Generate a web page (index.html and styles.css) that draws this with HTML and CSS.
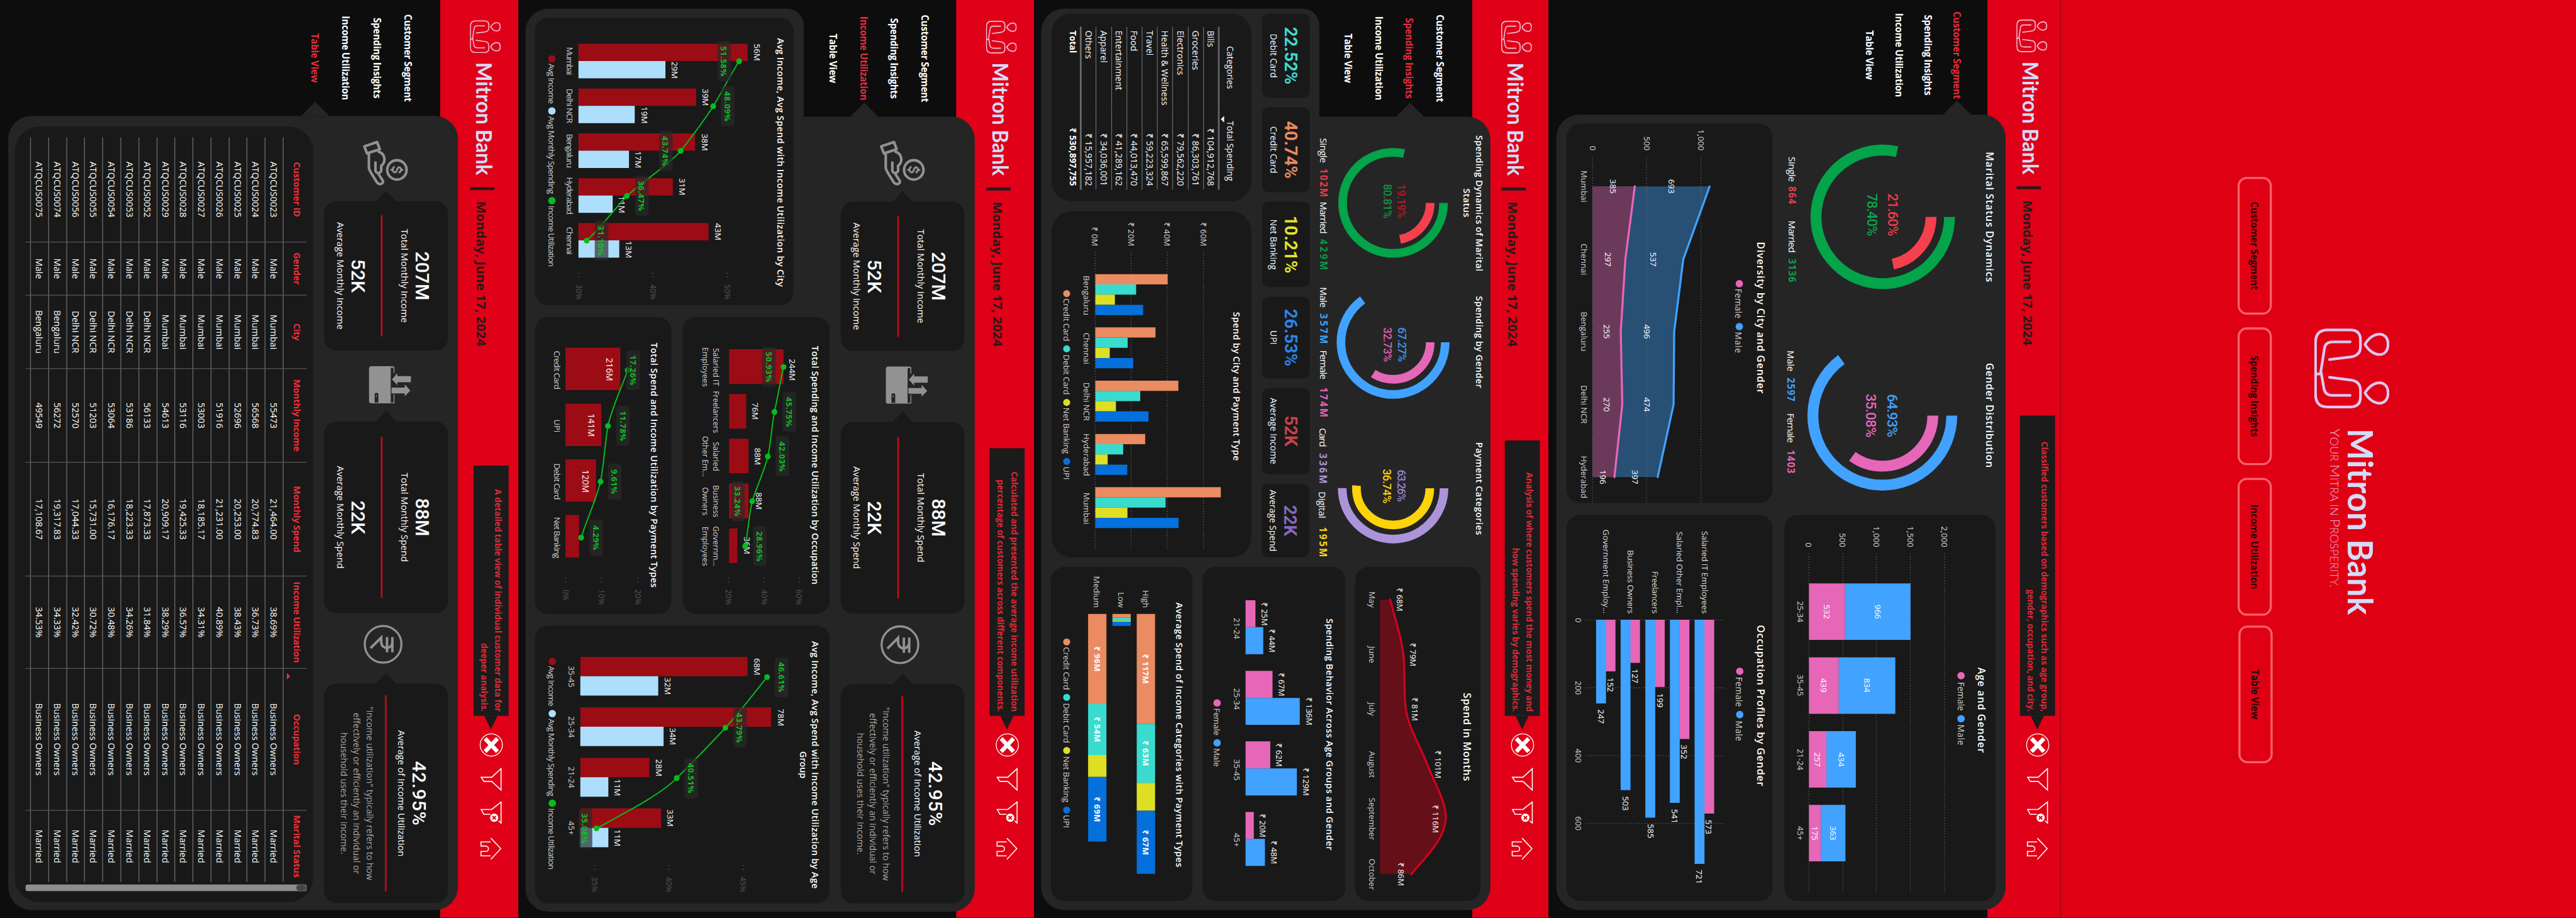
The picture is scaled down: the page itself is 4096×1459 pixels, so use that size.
FILE: index.html
```html
<!DOCTYPE html>
<html lang="en">
<head>
<meta charset="utf-8">
<title>Mitron Bank dashboard</title>
<link rel="stylesheet" href="styles.css">
</head>
<body>
<svg class="defs" aria-hidden="true">
  <symbol id="mark" viewBox="0 0 195 182">
    <g fill="none" stroke="currentColor" stroke-linecap="round" stroke-linejoin="round">
      <path d="M39 59C6 40 6 3 39 3S72 40 39 59Z"/>
      <path d="M157 59C124 40 124 3 157 3S190 40 157 59Z"/>
      <path d="M76 145L70 98Q68 70 45 70H28Q4 70 4 95V150Q4 179 35 179H160Q191 179 191 150V95Q191 70 167 70H150Q127 70 125 98L119 145"/>
      <path d="M33 95V137Q33 154 47 157L111 167V179M163 95V137Q163 154 149 158L104 166"/>
    </g>
  </symbol>
  <symbol id="tools" viewBox="1774 20 320 72">
    <g fill="none" stroke="#fff" stroke-width="2.4">
      <circle cx="1806.700" cy="56" r="27" stroke-width="2"/>
      <path d="M1791 41L1822.500 71M1822.500 41L1791 71" stroke-width="10"/>
      <path d="M1864 32.300H1916L1895 55V74L1885 80.500V55Z"/>
      <path d="M1990.700 38.300L1996 32.300H1945L1963 55V80.500L1975 74V58"/>
      <circle cx="1983" cy="49" r="10" fill="#fff" stroke="none"/>
      <path d="M1979 45L1987 53M1987 45L1979 53" stroke="#e00017" stroke-width="3"/>
      <path d="M2032.700 57L2058 33L2084 57M2041.700 57.500V81H2051.700V70C2051.700 60.500 2065 60.500 2065 70V81H2075.700V57.500"/>
    </g>
  </symbol>
  <symbol id="hand" viewBox="0 0 125 125">
    <g fill="none" stroke="#929292" stroke-width="6.300" stroke-linejoin="round" stroke-linecap="round">
      <path d="M20 117L9.500 86L27 79.500L37 110.500Z"/>
      <path d="M33 82C38 66 58 64 67 76H78C86 76 87 90 78 90H59M38 106H72C78 106 88 98 108 86C116 78 108 68 102 73L85 84"/>
      <circle cx="77" cy="38" r="23.500"/>
      <path stroke-width="4.500" d="M83 32C80 26 70 27 71 33C72 39 83 37 83 43C83 49 73 50 70 45M77 27V24M77 49V52"/>
    </g>
  </symbol>
  <symbol id="wallet" viewBox="0 0 115 115">
    <path fill="#929292" d="M18 44H31V46H20Q17 47 17 50Q17 53 21 53H104V100Q104 105.700 98 105.700H20Q14 105.700 14 99V49Q14 44 18 44ZM82 44H104V54H102V46H82ZM38 4H53V37H60L46 50L31 37H38ZM66 51V19H58L73 5.500L87 19H80V51Z"/>
    <path fill="#252525" d="M102 83H82Q79 83 79 86V89Q79 92 82 92H102Z"/>
    <path fill="#929292" d="M84 87H88V89H84Z"/>
  </symbol>
  <symbol id="rupee" viewBox="0 0 95 95">
    <g fill="none" stroke="#929292">
      <circle cx="47.500" cy="47.500" r="44.500" stroke-width="5"/>
      <path stroke-width="6" d="M30 25H67M30 38H67M30 25H42C61 25 61 52 42 52H31L57 78"/>
    </g>
  </symbol>
</svg>

<div class="view">
<main class="stage">

<section class="page home">
  <div class="hero">
    <svg class="hero-mark" viewBox="0 0 195 182"><use href="#mark"/></svg>
    <svg class="hero-name" viewBox="0 0 460 110">
      <text class="brand" x="0" y="62" font-size="85" textLength="452" lengthAdjust="spacingAndGlyphs">Mitron Bank</text>
      <text class="tagline" x="0" y="105" textLength="385" lengthAdjust="spacingAndGlyphs"><tspan>Y</tspan>OUR <tspan>M</tspan>ITRA IN <tspan>P</tspan>ROSPERITY.</text>
    </svg>
  </div>
  <div class="home-nav"><a>Customer Segment</a><a>Spending Insights</a><a>Income Utilization</a><a class="low">Table View</a></div>
</section>

<section class="page p2">
  <header class="top">
    <svg class="mark" viewBox="0 0 195 182"><use href="#mark"/></svg>
    <svg class="name" viewBox="0 0 276 50"><text class="brand" x="0" y="44.600" font-size="52" textLength="274" lengthAdjust="spacingAndGlyphs">Mitron Bank</text></svg>
    <i class="bar"></i>
    <svg class="date" viewBox="0 0 354 50"><text x="0" y="41" textLength="352" lengthAdjust="spacingAndGlyphs">Monday, June 17, 2024</text></svg>
    <p class="tip" style="width:728px">Classified customers based on demographics such as age group,<br>gender, occupation, and city.</p>
    <svg class="tools"><use href="#tools"/></svg>
  </header>
  <div class="board seg">
    <nav class="nav"><a class="on">Customer Segment</a><a>Spending Insights</a><a>Income Utilization</a><a>Table View</a></nav>
    <div class="panel">
      <svg class="free" viewBox="300 159 920 512">
        <text class="t" x="526" y="172" textLength="316">Marital Status Dynamics</text>
        <text class="t" x="1007" y="172" textLength="254">Gender Distribution</text>
        <g class="ring" stroke-width="26.500">
          <circle cx="526" cy="432" r="162" pathLength="100" stroke="#03a44a" stroke-dasharray="78.4 100" transform="rotate(-90 526 432)"/>
          <circle cx="526" cy="432" r="117" pathLength="100" stroke="#f5404e" stroke-dasharray="21.6 100" transform="rotate(-90 526 432)"/>
          <circle cx="1008" cy="433" r="168.500" pathLength="100" stroke="#41a2ff" stroke-dasharray="64.93 100" transform="rotate(-90 1008 433)"/>
          <circle cx="1008" cy="433" r="122.500" pathLength="100" stroke="#e667b7" stroke-dasharray="35.08 100" transform="rotate(-90 1008 433)"/>
        </g>
        <g class="din" font-size="34">
          <text x="521" y="407" fill="#ee3b49" textLength="104">21.60%</text><text x="521" y="457" fill="#0aa34b" textLength="104">78.40%</text>
          <text x="1008" y="408" fill="#41a2ff" textLength="105">64.93%</text><text x="1008" y="461" fill="#e667b7" textLength="106">35.08%</text>
        </g>
        <g class="lg" font-size="23">
          <text x="380" y="652" textLength="61">Single</text><text class="b" x="452" y="652" fill="#e43c4a" textLength="43">864</text>
          <text x="535" y="652" textLength="78">Married</text><text class="b" x="627" y="652" fill="#0aa34b" textLength="57">3136</text>
          <text x="850" y="655" textLength="51">Male</text><text class="b" x="916" y="655" fill="#41a2ff" textLength="57">2597</text>
          <text x="1002" y="655" textLength="72">Female</text><text class="b" x="1091" y="655" fill="#e667b7" textLength="57">1403</text>
        </g>
      </svg>
      <svg class="card" viewBox="1249 159 936 512">
        <text class="t" x="1722" y="192" textLength="207">Age and Gender</text>
        <circle cx="1638.600" cy="242" r="9" fill="#e667b7"/><circle cx="1743" cy="242" r="9" fill="#41a2ff"/>
        <g class="lg m" font-size="21"><text x="1654" y="242" textLength="70">Female</text><text x="1757" y="242" textLength="50">Male</text></g>
        <path class="grid" d="M1343 282H2167M1343 365H2167M1343 447.600H2167M1343 529H2167M1343 611H2167"/>
        <g class="r"><text x="1327" y="282">2,000</text><text x="1327" y="365">1,500</text><text x="1327" y="447">1,000</text><text x="1327" y="529">500</text><text x="1327" y="611">0</text></g>
        <g fill="#e667b7"><path d="M1415 523.400h137v87.600h-137zM1594 538.700h137v72.300h-137zM1773 568.700h137v42.300h-137zM1952 582.200h137v28.800h-137z"/></g>
        <g fill="#41a2ff"><path d="M1415 364.600h137v159h-137zM1594 401.500h137v137.300h-137zM1773 497.300h137v71.500h-137zM1952 522.500h137v59.800h-137z"/></g>
        <g font-size="20.500"><text x="1483.500" y="444">966</text><text x="1483.500" y="567">532</text><text x="1662" y="470">834</text><text x="1662" y="575">439</text><text x="1842" y="533">434</text><text x="1842" y="590">257</text><text x="2020.600" y="552">363</text><text x="2020.600" y="597">175</text></g>
        <g class="m"><text x="1483.500" y="632">25-34</text><text x="1662" y="632">35-45</text><text x="1842" y="632">21-24</text><text x="2020.600" y="632">45+</text></g>
      </svg>
      <svg class="card" viewBox="300 699 920 500">
        <text class="t" x="770.500" y="727.600" textLength="368">Diversity by City and Gender</text>
        <circle cx="688" cy="780" r="9" fill="#e667b7"/><circle cx="792" cy="780" r="9" fill="#41a2ff"/>
        <g class="lg m" font-size="21"><text x="700" y="781" textLength="72">Female</text><text x="805" y="781" textLength="51">Male</text></g>
        <path fill="#285074" d="M452 852L629 916L804 938L981 939.500L1157 978V1136H452Z"/>
        <path fill="#6b3a5a" d="M452 1033.600L629 1056.500L804 1067.600L981 1064L1157 1083V1136H452Z"/>
        <path class="grid" d="M380 873H1222M380 1005H1222M380 1136H1222"/>
        <g fill="none" stroke-width="5" stroke-linecap="round" stroke-linejoin="round"><path stroke="#41a2ff" d="M452 852L629 916L804 938L981 939.500L1157 978"/><path stroke="#e667b7" d="M452 1033.600L629 1056.500L804 1067.600L981 1064L1157 1083"/></g>
        <g class="r"><text x="365" y="872">1,000</text><text x="365" y="1004">500</text><text x="365" y="1135">0</text></g>
        <g font-size="20.500"><text x="452" y="944">693</text><text x="629" y="988">537</text><text x="804" y="1004">496</text><text x="981" y="1003">474</text><text x="1157" y="1032">397</text><text x="452" y="1086">385</text><text x="629" y="1098">297</text><text x="804" y="1102">255</text><text x="981" y="1101">270</text><text x="1157" y="1110">196</text></g>
        <g class="m"><text x="452" y="1157">Mumbai</text><text x="629" y="1157">Chennai</text><text x="804" y="1157">Bengaluru</text><text x="981" y="1157">Delhi NCR</text><text x="1157" y="1157">Hyderabad</text></g>
      </svg>
      <svg class="card" viewBox="1249 699 936 500">
        <text class="t" x="1711" y="728" textLength="391">Occupation Profiles by Gender</text>
        <circle cx="1628" cy="779" r="9" fill="#e667b7"/><circle cx="1733" cy="779" r="9" fill="#41a2ff"/>
        <g class="lg m" font-size="21"><text x="1642" y="780" textLength="72">Female</text><text x="1748" y="780" textLength="49">Male</text></g>
        <path class="grid" d="M1503.500 817V1155M1668 817V1155M1832.500 817V1155M1997 817V1155"/>
        <path fill="#e667b7" d="M1503 841h470v24h-470zM1503 901h289v24h-289zM1503 961h163v24h-163zM1503 1021h104.500v24h-104.500zM1503 1080.500h125v24h-125z"/>
        <path fill="#41a2ff" d="M1503 864.500h592v24h-592zM1503 924.500h444v24h-444zM1503 984h480v24h-480zM1503 1044h413v24h-413zM1503 1103.500h203v24h-203z"/>
        <g class="r"><text x="1488" y="864" textLength="200">Salaried IT Employees</text><text x="1488" y="924" textLength="199">Salaried Other Empl…</text><text x="1488" y="984" textLength="103">Freelancers</text><text x="1488" y="1044" textLength="154">Business Owners</text><text x="1488" y="1103" textLength="204">Government Employ…</text></g>
        <g class="l" font-size="20.500"><text x="1988" y="854">573</text><text x="2109" y="877">721</text><text x="1806" y="913">352</text><text x="1962" y="936">541</text><text x="1681" y="972">199</text><text x="1998" y="995">585</text><text x="1622" y="1032">127</text><text x="1931" y="1055">503</text><text x="1643" y="1092">152</text><text x="1720" y="1115">247</text></g>
        <g class="m"><text x="1504" y="1170">0</text><text x="1668" y="1170">200</text><text x="1832.500" y="1170">400</text><text x="1997" y="1170">600</text></g>
      </svg>
    </div>
  </div>
</section>

<section class="page p3">
  <header class="top">
    <svg class="mark" viewBox="0 0 195 182"><use href="#mark"/></svg>
    <svg class="name" viewBox="0 0 276 50"><text class="brand" x="0" y="44.600" font-size="52" textLength="274" lengthAdjust="spacingAndGlyphs">Mitron Bank</text></svg>
    <i class="bar"></i>
    <svg class="date" viewBox="0 0 354 50"><text x="0" y="41" textLength="352" lengthAdjust="spacingAndGlyphs">Monday, June 17, 2024</text></svg>
    <p class="tip" style="width:668px">Analysis of where customers spend the most money and<br>how spending varies by demographics.</p>
    <svg class="tools"><use href="#tools"/></svg>
  </header>
  <div class="board">
    <div class="back"><i class="upper"></i><i class="lower"></i></div>
    <div class="spend">
      <div class="left">
        <div class="lead">
          <nav class="nav"><a>Customer Segment</a><a class="on">Spending Insights</a><a>Income Utilization</a><a>Table View</a></nav>
          <svg class="free" viewBox="300 141 1052 424">
            <text class="t s" x="493" y="168" textLength="330">Spending Dynamics of Marital</text><text class="t s" x="492" y="198" textLength="70">Status</text>
            <text class="t s" x="829.500" y="168" textLength="223">Spending by Gender</text><text class="t s" x="1185" y="168" textLength="225">Payment Categories</text>
            <g class="ring" stroke-width="21">
              <circle cx="492" cy="377" r="122.500" pathLength="100" stroke="#03a44a" stroke-dasharray="78.4 100" transform="rotate(-90 492 377)"/>
              <circle cx="492" cy="377" r="90" pathLength="100" stroke="#f5404e" stroke-dasharray="22 100" transform="rotate(-90 492 377)"/>
              <circle cx="830" cy="377" r="126.500" pathLength="100" stroke="#41a2ff" stroke-dasharray="65 100" transform="rotate(-90 830 377)"/>
              <circle cx="830" cy="377" r="90" pathLength="100" stroke="#e667b7" stroke-dasharray="34 100" transform="rotate(-90 830 377)"/>
              <circle cx="1184" cy="377" r="123.500" pathLength="100" stroke="#ac94da" stroke-dasharray="50 100" transform="rotate(-90 1184 377)"/>
              <circle cx="1184" cy="377" r="89" pathLength="100" stroke="#ffd30a" stroke-dasharray="51.200 100" transform="rotate(-90 1184 377)"/>
            </g>
            <g class="din" font-size="27">
              <text x="488" y="357" fill="#bd1420" textLength="83">19.19%</text><text x="488" y="391" fill="#12903f" textLength="84">80.81%</text>
              <text x="836" y="356" fill="#3f93e6" textLength="84">67.27%</text><text x="836" y="391" fill="#dd5fae" textLength="84">32.73%</text>
              <text x="1178" y="357" fill="#9a83cc" textLength="78">63.26%</text><text x="1179" y="392" fill="#ffd30a" textLength="84">36.74%</text>
            </g>
            <g class="lg" font-size="23">
              <text x="335" y="545" textLength="60">Single</text><text class="b" x="408" y="545" fill="#e43c4a" textLength="70">102M</text>
              <text x="489" y="545" textLength="78">Married</text><text class="b" x="580" y="545" fill="#0a9747" textLength="75">429M</text>
              <text x="696" y="545" textLength="50">Male</text><text class="b" x="760" y="545" fill="#41a2ff" textLength="74">357M</text>
              <text x="849" y="545" textLength="71">Female</text><text class="b" x="939" y="545" fill="#e667b7" textLength="73">174M</text>
              <text x="1038" y="547" textLength="46">Card</text><text class="b" x="1099" y="547" fill="#ac94da" textLength="74">336M</text>
              <text x="1192" y="548" textLength="65">Digital</text><text class="b" x="1278" y="547" fill="#ffd30a" textLength="73">195M</text>
            </g>
          </svg>
        </div>
        <div class="tiles">
          <div class="tile"><b class="c-cyan">22.52%</b><span>Debit Card</span></div>
          <div class="tile"><b class="c-orange">40.74%</b><span>Credit Card</span></div>
          <div class="tile"><b class="c-yellow">10.21%</b><span>Net Banking</span></div>
          <div class="tile"><b class="c-blue">26.53%</b><span>UPI</span></div>
          <div class="tile"><b class="c-red">52K</b><span>Average Income</span></div>
          <div class="tile"><b class="c-violet">22K</b><span>Average Spend</span></div>
        </div>
        <div class="lows">
          <div class="catbox">
            <table class="cats">
              <thead><tr><th>Categories</th><th>Total Spending<i></i></th></tr></thead>
              <tbody>
                <tr><td>Bills</td><td>₹ 104,912,768</td></tr>
                <tr><td>Groceries</td><td>₹ 86,303,761</td></tr>
                <tr><td>Electronics</td><td>₹ 79,562,220</td></tr>
                <tr><td>Health &amp; Wellness</td><td>₹ 65,599,867</td></tr>
                <tr><td>Travel</td><td>₹ 59,223,324</td></tr>
                <tr><td>Food</td><td>₹ 44,013,470</td></tr>
                <tr><td>Entertainment</td><td>₹ 41,289,162</td></tr>
                <tr><td>Apparel</td><td>₹ 34,036,001</td></tr>
                <tr><td>Others</td><td>₹ 15,957,182</td></tr>
              </tbody>
              <tfoot><tr><td>Total</td><td>₹ 530,897,755</td></tr></tfoot>
            </table>
          </div>
          <svg class="card big" viewBox="512 721 840 485">
            <text class="t s" x="937" y="756" textLength="361">Spend by City and Payment Type</text>
            <path class="grid" d="M612 837H1330M612 925H1330M612 1012.600H1330M612 1100H1330"/>
            <g class="r"><text x="597" y="837" textLength="58">₹ 60M</text><text x="597" y="925" textLength="58">₹ 40M</text><text x="597" y="1012" textLength="58">₹ 20M</text><text x="597" y="1100" textLength="47">₹ 0M</text></g>
            <path fill="#ea8b61" d="M665 924h24.800v175.500h-24.800zM794 953.500h24.800v146h-24.800zM923 898h24.800v201.500h-24.800zM1052.500 978.500h24.800v121h-24.800zM1181.500 795h24.800v304.500h-24.800z"/>
            <path fill="#39dbcf" d="M689.800 1000.500h24.800v99h-24.800zM818.800 1021h24.800v78.500h-24.800zM947.800 990.500h24.800v109h-24.800zM1077.300 1032h24.800v67.500h-24.800zM1206.300 929h24.800v170.500h-24.800z"/>
            <path fill="#dedf24" d="M714.600 1052h24.800v47.500h-24.800zM843.600 1064.500h24.800v35h-24.800zM972.600 1049.500h24.800v50h-24.800zM1102.100 1069.500h24.800v30h-24.800zM1231.100 1021.500h24.800v78h-24.800z"/>
            <path fill="#0470dc" d="M739.400 983.500h24.800v116h-24.800zM868.400 1007.500h24.800v92h-24.800zM997.400 970.500h24.800v129h-24.800zM1126.900 1022h24.800v77.500h-24.800zM1255.900 897.500h24.800v202h-24.800z"/>
            <g class="m"><text x="716.500" y="1121">Bengaluru</text><text x="845" y="1121">Chennai</text><text x="974" y="1121">Delhi NCR</text><text x="1103" y="1121">Hyderabad</text><text x="1233" y="1121">Mumbai</text></g>
            <circle cx="712" cy="1169" r="8.500" fill="#ea8b61"/><circle cx="846" cy="1169" r="8.500" fill="#39dbcf"/><circle cx="976" cy="1169" r="8.500" fill="#dedf24"/><circle cx="1119" cy="1169" r="8.500" fill="#0470dc"/>
            <g class="lg m"><text x="723.600" y="1169" textLength="104">Credit Card</text><text x="860" y="1169" textLength="97">Debit Card</text><text x="988.500" y="1169" textLength="112">Net Banking</text><text x="1131.600" y="1169" textLength="32">UPI</text></g>
          </svg>
        </div>
      </div>
      <div class="right">
        <svg class="card" viewBox="1375 165 810 304">
          <text class="t" x="1787" y="197" textLength="214">Spend in Months</text>
          <path fill="#650f18" d="M1454 384C1499 373 1543 357 1588 352S1676 352 1720 346S1809 311 1854 294S1942 248 1986 249C2040 254 2076 297 2120 333V409H1454Z"/>
          <path fill="none" stroke="#cc0420" stroke-width="5" stroke-linecap="round" d="M1454 384C1499 373 1543 357 1588 352S1676 352 1720 346S1809 311 1854 294S1942 248 1986 249C2040 254 2076 297 2120 333"/>
          <g><text x="1454" y="361" textLength="57">₹ 68M</text><text x="1587.600" y="329" textLength="57">₹ 79M</text><text x="1720" y="324" textLength="57">₹ 81M</text><text x="1854" y="268" textLength="68">₹ 101M</text><text x="1986" y="273" textLength="68">₹ 116M</text><text x="2120" y="358" textLength="57">₹ 86M</text></g>
          <g class="m"><text x="1454" y="428">May</text><text x="1587.600" y="428">June</text><text x="1720" y="428">July</text><text x="1854" y="428">August</text><text x="1986" y="428">September</text><text x="2120.500" y="428">October</text></g>
        </svg>
        <svg class="card" viewBox="1375 493 810 347">
          <text class="t s" x="1781" y="531" textLength="562">Spending Behavior Across Age Groups and Gender</text>
          <path fill="#e667b7" d="M1455.500 711h65.500v24h-65.500zM1627 669.500h65.500v65.500h-65.500zM1798 675h65.500v60h-65.500zM1969 715h65.500v20h-65.500z"/>
          <path fill="#41a2ff" d="M1521 692h65.500v43h-65.500zM1692.500 603.500h65.500v131.500h-65.500zM1863.500 610.500h65.500v124.500h-65.500zM2034.500 688h65.500v47h-65.500z"/>
          <g><text x="1489" y="689" textLength="57">₹ 25M</text><text x="1554" y="670" textLength="57">₹ 44M</text><text x="1660" y="647" textLength="57">₹ 67M</text><text x="1725" y="580" textLength="68">₹ 136M</text><text x="1831" y="653" textLength="57">₹ 62M</text><text x="1896" y="588" textLength="68">₹ 129M</text><text x="2002" y="693" textLength="57">₹ 20M</text><text x="2067" y="665" textLength="57">₹ 48M</text></g>
          <g class="m"><text x="1524" y="756">21-24</text><text x="1695" y="756">25-34</text><text x="1867" y="756">35-45</text><text x="2037" y="756">45+</text></g>
          <circle cx="1704.600" cy="804" r="9" fill="#e667b7"/><circle cx="1801.600" cy="804" r="9" fill="#41a2ff"/>
          <g class="lg m"><text x="1717.500" y="805" textLength="66">Female</text><text x="1814.500" y="805" textLength="45">Male</text></g>
        </svg>
        <svg class="card" viewBox="1375 864 810 343">
          <text class="t s" x="1782" y="896" textLength="642">Average Spend of Income Categories with Payment Types</text>
          <path fill="#ea8b61" d="M1489 954.500h266v44.500h-266zM1489 1013.500h9v44.500h-9zM1489 1072.500h218.500v44.500h-218.500z"/>
          <path fill="#39dbcf" d="M1755 954.500h143.500v44.500h-143.500zM1498 1013.500h7v44.500h-7zM1707.500 1072.500h123.500v44.500h-123.500z"/>
          <path fill="#dedf24" d="M1898.500 954.500h67.500v44.500h-67.500zM1505 1013.500h2.500v44.500h-2.500zM1831 1072.500h53v44.500h-53z"/>
          <path fill="#0470dc" d="M1966 954.500h153v44.500h-153zM1507.500 1013.500h10.500v44.500h-10.500zM1884 1072.500h157v44.500h-157z"/>
          <g class="b"><text x="1622" y="977" textLength="72">₹ 117M</text><text x="1827" y="977" textLength="61">₹ 63M</text><text x="2043" y="977" textLength="61">₹ 67M</text><text x="1598" y="1095" textLength="61">₹ 96M</text><text x="1769" y="1095" textLength="61">₹ 54M</text><text x="1963" y="1095" textLength="61">₹ 69M</text></g>
          <g class="r m"><text x="1474" y="977">High</text><text x="1474" y="1037">Low</text><text x="1474" y="1096">Medium</text></g>
          <circle cx="1556.700" cy="1169" r="8.500" fill="#ea8b61"/><circle cx="1691" cy="1169" r="8.500" fill="#39dbcf"/><circle cx="1820" cy="1169" r="8.500" fill="#dedf24"/><circle cx="1964.600" cy="1169" r="8.500" fill="#0470dc"/>
          <g class="lg m"><text x="1569" y="1169" textLength="104">Credit Card</text><text x="1705" y="1169" textLength="97">Debit Card</text><text x="1834" y="1169" textLength="112">Net Banking</text><text x="1976" y="1169" textLength="32">UPI</text></g>
        </svg>
      </div>
    </div>
  </div>
</section>

<section class="page p4">
  <header class="top">
    <svg class="mark" viewBox="0 0 195 182"><use href="#mark"/></svg>
    <svg class="name" viewBox="0 0 276 50"><text class="brand" x="0" y="44.600" font-size="52" textLength="274" lengthAdjust="spacingAndGlyphs">Mitron Bank</text></svg>
    <i class="bar"></i>
    <svg class="date" viewBox="0 0 354 50"><text x="0" y="41" textLength="352" lengthAdjust="spacingAndGlyphs">Monday, June 17, 2024</text></svg>
    <p class="tip" style="width:649px">Calculated and presented the average income utilization<br>percentage of customers across different components.</p>
    <svg class="tools"><use href="#tools"/></svg>
  </header>
  <div class="board">
    <div class="back"><i class="upper"></i><i class="lower"></i></div>
    <div class="kpis">
      <nav class="nav"><a>Customer Segment</a><a>Spending Insights</a><a class="on">Income Utilization</a><a>Table View</a></nav>
      <svg class="ico hand"><use href="#hand"/></svg>
      <div class="kpi k1"><b>207M</b><span>Total Monthly Income</span><hr><b>52K</b><span>Average Monthly Income</span></div>
      <svg class="ico wallet"><use href="#wallet"/></svg>
      <div class="kpi k2"><b>88M</b><span>Total Monthly Spend</span><hr><b>22K</b><span>Average Monthly Spend</span></div>
      <svg class="ico rupee"><use href="#rupee"/></svg>
      <div class="kpi k3"><b>42.95%</b><span>Average of Income Utilization</span><hr><q>"Income utilization" typically refers to how<br>effectively or efficiently an individual or<br>household uses their income.</q></div>
    </div>
    <div class="util">
      <svg class="card city" viewBox="43 584 697 627">
        <text class="t s" x="394" y="615" textLength="603">Avg Income, Avg Spend with Income Utilization by City</text>
        <path fill="#9c0c15" d="M106 695h42v410.500h-42zM214.700 820h42v285.500h-42zM323.400 822.500h42v283h-42zM432.100 876.700h42v228.800h-42zM540.800 790h42v315.500h-42z"/>
        <path fill="#addffd" d="M148 894.500h42v211h-42zM256.700 969h42v136.500h-42zM365.400 983h42v122.500h-42zM474.100 1022.500h42v83h-42zM582.800 1006.500h42v99h-42z"/>
        <g font-size="20.500"><text x="127" y="672">56M</text><text x="170" y="871">29M</text><text x="236" y="797">39M</text><text x="279" y="945">19M</text><text x="345" y="799">38M</text><text x="387" y="960">17M</text><text x="453" y="854">31M</text><text x="496" y="1000">11M</text><text x="562" y="766">43M</text><text x="605" y="983">13M</text></g>
        <path class="line" d="M148.700 715.700C180 737 225 758 257.800 778.700C300 806 330 829 366 857.600C398 884 440 950 475 988C512 1022 552 1052 583.600 1085.600"/>
        <g fill="#06bd1c"><circle cx="148.700" cy="715.700" r="7"/><circle cx="257.800" cy="778.700" r="7"/><circle cx="366" cy="857.600" r="7"/><circle cx="475" cy="988" r="7"/><circle cx="583.600" cy="1085.600" r="7"/></g>
        <g class="pill"><rect x="100" y="735" width="97" height="33" rx="7"/><rect x="209" y="727" width="97" height="33" rx="7"/><rect x="317" y="877" width="97" height="33" rx="7"/><rect x="426" y="935" width="97" height="33" rx="7"/><rect x="535" y="1033" width="97" height="33" rx="7"/></g>
        <g class="pct"><text x="148.700" y="752" textLength="73">51.58%</text><text x="257.800" y="744" textLength="73">48.09%</text><text x="366" y="894" textLength="73">43.74%</text><text x="475" y="952" textLength="73">36.47%</text><text x="583.600" y="1050" textLength="73">31.10%</text></g>
        <path class="tick" d="M662 745h12M662 925h12M662 1105h12"/>
        <g class="dim"><text x="708" y="745">50%</text><text x="708" y="925">40%</text><text x="708" y="1105">30%</text></g>
        <g class="m"><text x="148" y="1127" textLength="68">Mumbai</text><text x="257" y="1127" textLength="84">Delhi NCR</text><text x="366" y="1127" textLength="83">Bengaluru</text><text x="475" y="1127" textLength="91">Hyderabad</text><text x="584" y="1127" textLength="67">Chennai</text></g>
        <circle cx="143" cy="1170" r="9" fill="#9c0c15"/><circle cx="269" cy="1170" r="9" fill="#addffd"/><circle cx="486.500" cy="1170" r="9" fill="#06bd1c"/>
        <g class="lg m"><text x="154" y="1171" textLength="98">Avg Income</text><text x="281.500" y="1171" textLength="189">Avg Monthly Spending</text><text x="499" y="1171" textLength="148">Income Utilization</text></g>
      </svg>
      <svg class="card occ" viewBox="769 496 720 357">
        <text class="t s" x="1128" y="530" textLength="579">Total Spending and Income Utilization by Occupation</text>
        <path fill="#9c0c15" d="M847 608h84v132h-84zM955.500 698.500h84v41.500h-84zM1064 693h84v47h-84zM1173 693h84v47h-84zM1281.700 720h84v20h-84z"/>
        <g font-size="20.500"><text x="897" y="586">244M</text><text x="997" y="676">76M</text><text x="1107" y="670">88M</text><text x="1215" y="668">88M</text><text x="1323" y="697">36M</text></g>
        <path class="line" d="M890 608C926 616 963 622 999 630C1036 637 1071 638 1107 646C1143 655 1180 673 1215.600 684C1250 692 1290 694 1324.700 701"/>
        <g fill="#06bd1c"><circle cx="890" cy="608" r="7"/><circle cx="999" cy="630" r="7"/><circle cx="1107" cy="646" r="7"/><circle cx="1215.600" cy="684" r="7"/><circle cx="1324.700" cy="701" r="7"/></g>
        <g class="pill"><rect x="841" y="627" width="97" height="33" rx="7"/><rect x="950" y="577" width="97" height="33" rx="7"/><rect x="1058" y="594" width="97" height="33" rx="7"/><rect x="1167" y="702" width="97" height="33" rx="7"/><rect x="1276" y="649" width="97" height="33" rx="7"/></g>
        <g class="pct"><text x="890" y="643" textLength="73">50.93%</text><text x="999" y="594" textLength="73">45.75%</text><text x="1107" y="611" textLength="73">42.03%</text><text x="1215.600" y="719" textLength="73">33.24%</text><text x="1325" y="665" textLength="73">28.96%</text></g>
        <path class="tick" d="M1402 570h12M1402 655h12M1402 741h12"/>
        <g class="dim"><text x="1448" y="570">60%</text><text x="1448" y="655">40%</text><text x="1448" y="741">20%</text></g>
        <g class="m" font-size="19"><text x="890" y="772">Salaried IT</text><text x="890" y="797">Employees</text><text x="999" y="772">Freelancers</text><text x="1107" y="772">Salaried</text><text x="1107" y="797">Other Em…</text><text x="1215.600" y="772">Business</text><text x="1215.600" y="797">Owners</text><text x="1324.700" y="772">Governm…</text><text x="1324.700" y="797">Employees</text></g>
      </svg>
      <svg class="card pay" viewBox="769 880 720 331">
        <text class="t s" x="1128" y="921" textLength="594">Total Spend and Income Utilization by Payment Types</text>
        <path fill="#9c0c15" d="M843 1004h103v133h-103zM979 1050h103v87h-103zM1114 1063h103v74h-103zM1249 1104h103v33h-103z"/>
        <g font-size="21.500"><text x="896" y="1029">216M</text><text x="1031" y="1074">141M</text><text x="1167" y="1088">120M</text></g>
        <path class="line" d="M897.600 986C943 1002 988 1024 1033 1034C1078 1042 1123 1043 1168 1052C1213 1063 1259 1085 1304 1099"/>
        <g fill="#06bd1c"><circle cx="897.600" cy="986" r="7"/><circle cx="1033" cy="1034" r="7"/><circle cx="1168" cy="1052" r="7"/><circle cx="1304" cy="1099" r="7"/></g>
        <g class="pill"><rect x="849" y="956" width="97" height="33" rx="7"/><rect x="984" y="981" width="97" height="33" rx="7"/><rect x="1124" y="1001" width="88" height="33" rx="7"/><rect x="1260" y="1046" width="88" height="33" rx="7"/></g>
        <g class="pct"><text x="897.600" y="972" textLength="73">17.26%</text><text x="1033" y="997" textLength="73">11.78%</text><text x="1168" y="1018" textLength="60">9.61%</text><text x="1304" y="1062" textLength="60">4.29%</text></g>
        <path class="tick" d="M1402 961h12M1402 1050h12M1402 1137h12"/>
        <g class="dim"><text x="1448" y="961">20%</text><text x="1448" y="1050">10%</text><text x="1443" y="1137">0%</text></g>
        <g class="m"><text x="897.600" y="1157" textLength="94">Credit Card</text><text x="1033" y="1157">UPI</text><text x="1168" y="1157" textLength="88">Debit Card</text><text x="1304" y="1157" textLength="100">Net Banking</text></g>
      </svg>
      <svg class="card age" viewBox="1517 496 674 715">
        <text class="t s" x="1855" y="530" textLength="600">Avg Income, Avg Spend with Income Utilization by Age</text><text class="t s" x="1855" y="560" textLength="66">Group</text>
        <path fill="#9c0c15" d="M1593 695h47v406h-47zM1715.500 638h47v463h-47zM1838 933.500h47v167.500h-47zM1960.500 905h47v196h-47z"/>
        <path fill="#addffd" d="M1640 912h47v189h-47zM1762.500 899h47v202h-47zM1885 1033h47v68h-47zM2007.500 1033h47v68h-47z"/>
        <g font-size="20.500"><text x="1617" y="672">68M</text><text x="1664" y="888">32M</text><text x="1740" y="614">78M</text><text x="1786" y="876">34M</text><text x="1862" y="910">28M</text><text x="1910" y="1010">11M</text><text x="1984" y="882">33M</text><text x="2032" y="1011">11M</text></g>
        <path class="line" d="M1642 648C1683 681 1726 713 1765 749C1806 787 1850 830 1887 867C1926 905 1970 990 2009 1061.700"/>
        <g fill="#06bd1c"><circle cx="1642" cy="648" r="7"/><circle cx="1765" cy="749" r="7"/><circle cx="1887" cy="867" r="7"/><circle cx="2009" cy="1061.700" r="7"/></g>
        <g class="pill"><rect x="1594" y="596" width="97" height="33" rx="7"/><rect x="1716" y="697" width="97" height="33" rx="7"/><rect x="1839" y="815" width="97" height="33" rx="7"/><rect x="1961" y="1072" width="97" height="33" rx="7"/></g>
        <g class="pct"><text x="1642" y="613" textLength="73">46.61%</text><text x="1765" y="715" textLength="73">43.79%</text><text x="1887" y="832" textLength="73">40.51%</text><text x="2009" y="1090" textLength="73">35.08%</text></g>
        <path class="tick" d="M2098 706h12M2098 886h12M2098 1066h12"/>
        <g class="dim"><text x="2145" y="706">45%</text><text x="2145" y="886">40%</text><text x="2145" y="1066">35%</text></g>
        <g class="m"><text x="1641" y="1122">35-45</text><text x="1763" y="1122">25-34</text><text x="1885" y="1122">21-24</text><text x="2008" y="1122">45+</text></g>
        <circle cx="1604" cy="1169" r="9" fill="#9c0c15"/><circle cx="1730.500" cy="1169" r="9" fill="#addffd"/><circle cx="1948" cy="1169" r="9" fill="#06bd1c"/>
        <g class="lg m"><text x="1615" y="1171" textLength="98">Avg Income</text><text x="1743" y="1171" textLength="188">Avg Monthly Spending</text><text x="1960" y="1171" textLength="149">Income Utilization</text></g>
      </svg>
    </div>
  </div>
</section>

<section class="page p5">
  <header class="top">
    <svg class="mark" viewBox="0 0 195 182"><use href="#mark"/></svg>
    <svg class="name" viewBox="0 0 276 50"><text class="brand" x="0" y="44.600" font-size="52" textLength="274" lengthAdjust="spacingAndGlyphs">Mitron Bank</text></svg>
    <i class="bar"></i>
    <svg class="date" viewBox="0 0 354 50"><text x="0" y="41" textLength="352" lengthAdjust="spacingAndGlyphs">Monday, June 17, 2024</text></svg>
    <p class="tip" style="width:607px">A detailed table view of individual customer data for<br>deeper analysis.</p>
    <svg class="tools"><use href="#tools"/></svg>
  </header>
  <div class="board">
    <div class="back"><i class="full"></i></div>
    <div class="kpis">
      <nav class="nav"><a>Customer Segment</a><a>Spending Insights</a><a>Income Utilization</a><a class="on">Table View</a></nav>
      <svg class="ico hand"><use href="#hand"/></svg>
      <div class="kpi k1"><b>207M</b><span>Total Monthly Income</span><hr><b>52K</b><span>Average Monthly Income</span></div>
      <svg class="ico wallet"><use href="#wallet"/></svg>
      <div class="kpi k2"><b>88M</b><span>Total Monthly Spend</span><hr><b>22K</b><span>Average Monthly Spend</span></div>
      <svg class="ico rupee"><use href="#rupee"/></svg>
      <div class="kpi k3"><b>42.95%</b><span>Average of Income Utilization</span><hr><q>"Income utilization" typically refers to how<br>effectively or efficiently an individual or<br>household uses their income.</q></div>
    </div>
    <div class="tablebox">
      <table class="data">
        <colgroup><col style="width:254px"><col style="width:129px"><col style="width:178px"><col style="width:227px"><col style="width:276px"><col style="width:224px"><col style="width:344px"><col style="width:174px"></colgroup>
        <thead><tr><th>Customer ID</th><th>Gender</th><th>City</th><th>Monthly Income</th><th>Monthly Spend</th><th>Income Utilization</th><th class="sort">Occupation</th><th>Marital Status</th></tr></thead>
        <tbody>
          <tr><td>ATQCUS0023</td><td>Male</td><td>Mumbai</td><td>55473</td><td>21,464.00</td><td>38.69%</td><td>Business Owners</td><td>Married</td></tr>
          <tr><td>ATQCUS0024</td><td>Male</td><td>Mumbai</td><td>56568</td><td>20,774.83</td><td>36.73%</td><td>Business Owners</td><td>Married</td></tr>
          <tr><td>ATQCUS0025</td><td>Male</td><td>Mumbai</td><td>52696</td><td>20,253.00</td><td>38.43%</td><td>Business Owners</td><td>Married</td></tr>
          <tr><td>ATQCUS0026</td><td>Male</td><td>Mumbai</td><td>51916</td><td>21,231.00</td><td>40.89%</td><td>Business Owners</td><td>Married</td></tr>
          <tr><td>ATQCUS0027</td><td>Male</td><td>Mumbai</td><td>53003</td><td>18,185.17</td><td>34.31%</td><td>Business Owners</td><td>Married</td></tr>
          <tr><td>ATQCUS0028</td><td>Male</td><td>Mumbai</td><td>53116</td><td>19,425.33</td><td>36.57%</td><td>Business Owners</td><td>Married</td></tr>
          <tr><td>ATQCUS0029</td><td>Male</td><td>Mumbai</td><td>54613</td><td>20,909.17</td><td>38.29%</td><td>Business Owners</td><td>Married</td></tr>
          <tr><td>ATQCUS0052</td><td>Male</td><td>Delhi NCR</td><td>56133</td><td>17,873.33</td><td>31.84%</td><td>Business Owners</td><td>Married</td></tr>
          <tr><td>ATQCUS0053</td><td>Male</td><td>Delhi NCR</td><td>53186</td><td>18,223.33</td><td>34.26%</td><td>Business Owners</td><td>Married</td></tr>
          <tr><td>ATQCUS0054</td><td>Male</td><td>Delhi NCR</td><td>53064</td><td>16,176.17</td><td>30.48%</td><td>Business Owners</td><td>Married</td></tr>
          <tr><td>ATQCUS0055</td><td>Male</td><td>Delhi NCR</td><td>51203</td><td>15,731.00</td><td>30.72%</td><td>Business Owners</td><td>Married</td></tr>
          <tr><td>ATQCUS0056</td><td>Male</td><td>Delhi NCR</td><td>52570</td><td>17,044.33</td><td>32.42%</td><td>Business Owners</td><td>Married</td></tr>
          <tr><td>ATQCUS0074</td><td>Male</td><td>Bengaluru</td><td>56272</td><td>19,317.83</td><td>34.33%</td><td>Business Owners</td><td>Married</td></tr>
          <tr><td>ATQCUS0075</td><td>Male</td><td>Bengaluru</td><td>49549</td><td>17,108.67</td><td>34.53%</td><td>Business Owners</td><td>Married</td></tr>
          <tr class="rest"><td></td><td></td><td></td><td></td><td></td><td></td><td></td><td></td></tr>
        </tbody>
      </table>
      <div class="scroll"><i></i></div>
    </div>
  </div>
</section>

</main>
</div>
</body>
</html>
```
FILE: styles.css
```css
* { box-sizing: border-box; }
html, body { margin: 0; padding: 0; }
body {
  width: 4096px; height: 1459px; overflow: hidden; background: #0d0d0d;
  font-family: "Open Sans", "Noto Sans", sans-serif; color: #fff;
}
.defs { position: absolute; width: 0; height: 0; }

/* The pages stack top to bottom, and the whole stack is turned a quarter clockwise. */
.view { width: 4096px; height: 1459px; overflow: hidden; contain: strict; }
.stage {
  width: 2226px; height: 6250px;
  transform-origin: 0 0;
  transform: translateX(4096px) rotate(90deg) scale(.65536);
}
.page { width: 2226px; overflow: hidden; background: #0d0d0d; }
.home { height: 1250px; background: #e00013; }
.p2 { height: 1243px; --dy: 0px; --dx: 0px; --red: 178px; --panel: 134px; }
.p3 { height: 1248px; --dy: 7px; --dx: 3px; --red: 185px; --panel: 141px; }
.p4 { height: 1251px; --dy: 8.500px; --dx: 3px; --red: 189px; --panel: 144px; }
.p5 { height: 1258px; --dy: 9.500px; --dx: 2px; --red: 190px; --panel: 147px; }

svg { display: block; flex: none; fill: #fff; font-size: 20px; }
svg text { text-anchor: middle; dominant-baseline: central; }
svg .brand, svg .tagline, .date text { text-anchor: start; dominant-baseline: alphabetic; }
.brand { font-family: Lato, "Open Sans", sans-serif; font-weight: 700; fill: #d3dcf9; }
.tagline { font-family: Lato, sans-serif; font-weight: 300; font-size: 26px; fill: #e9b5dc; }
.tagline tspan { font-size: 33px; }
.date text { font-size: 31px; font-weight: 700; fill: #241a1a; }

/* home */
.hero { display: flex; padding: 453px 0 0 796px; height: 738px; gap: 48px; }
.hero-mark { width: 195px; height: 182px; stroke-width: 6.500; color: #dcc8f0; }
.hero-name { width: 460px; height: 110px; margin-top: 39px; overflow: visible; }
.home-nav { display: flex; gap: 31px; padding-left: 429px; }
.home-nav a {
  width: 334px; height: 83px; border: 5px solid #f8636d; border-radius: 22px; flex: none;
  display: flex; align-items: center; justify-content: center;
  color: #240508; font-weight: 700; font-size: 23px; letter-spacing: -.3px;
}
.home-nav .low { margin-top: -2px; margin-left: -7px; }

/* page header */
.top {
  height: var(--red); background: #e00017; display: flex; align-items: flex-start;
  padding: var(--dy) 0 0 calc(47px + var(--dx));
}
.top .mark { width: 80px; height: 75px; margin-top: 33px; color: #ecc4dc; stroke-width: 6; }
.top .name { width: 276px; height: 50px; margin: 48px 0 0 22px; overflow: visible; }
.top .bar { width: 7px; height: 59px; margin: 48px 0 0 27px; background: #241a1a; flex: none; }
.top .date { width: 354px; height: 50px; margin: 50px 0 0 27px; overflow: visible; }
.tip {
  position: relative; margin: 14px 38px 0 auto; height: 85px; padding: 9px 10px 0 0; flex: none;
  background: #1b1b1b; color: #de2838; font-weight: 700; font-size: 21px; line-height: 33px;
  letter-spacing: -.2px; text-align: right; white-space: nowrap;
}
.tip::after {
  content: ""; position: absolute; left: 100%; top: 27px;
  border: 16px solid transparent; border-left: 33px solid #1b1b1b; border-right: 0;
}
.top .tools { width: 320px; height: 72px; margin: 20px 132px 0 0; }

/* body of a page */
.board { position: relative; margin-top: calc(var(--panel) - var(--red)); }
.nav { flex: none; display: flex; flex-direction: column; align-items: center; position: relative; }
.nav a {
  height: 75px; display: flex; align-items: center; justify-content: center;
  font-weight: 700; font-size: 23px; letter-spacing: -.4px; white-space: nowrap; position: relative; width: 100%;
}
.nav .on { color: #e82b3c; }
.nav .on::after {
  content: ""; position: absolute; right: 0; top: 2px;
  border: 34px solid transparent; border-right: 34px solid #252525; border-left: 0;
}
.seg .nav { width: 278px; padding: 82px 0 0; }
.seg .nav a { height: 70.500px; padding-right: 11px; }
.seg { display: flex; }
.panel {
  width: 1929px; height: 1090px; border-radius: 56px; background: #252525; padding: 25px 22px;
  display: grid; grid-template: 512px 500px / 920px 936px; gap: 28px 29px;
}
.panel svg { width: 100%; height: 100%; }
.free { overflow: visible; }
.card, .kpi, .catbox, .tablebox { background: #191919; border-radius: 32px; }
.card { width: 100%; }
.card.big { border-radius: 50px; }

/* chart parts */
.t { font-weight: 600; font-size: 24.500px; }
.t.s { font-size: 22px; }
.ring { fill: none; }
.din { font-family: Roboto, sans-serif; font-weight: 500; }
svg .lg text, svg .l text { text-anchor: start; }
svg .r text { text-anchor: end; }
.b { font-weight: 700; }
.r { fill: #dcdcdc; }
.m { fill: #d2d2d2; }
.dim { fill: #565656; font-size: 19px; }
.grid { fill: none; stroke: #858585; stroke-width: 1.600; stroke-dasharray: 1.600 4.800; }
.tick { stroke: #777; stroke-width: 1.600; stroke-dasharray: 2 7; }
.line { fill: none; stroke: #06bd1c; stroke-width: 3; }
.pill { fill: #292929; fill-opacity: .68; }
.pct { fill: #12bd26; font-weight: 700; }

/* stepped backdrop */
.back i { position: absolute; background: #252525; }
.back .upper { left: 283px; top: 0; width: 1924px; height: 1090px; border-radius: 56px 56px 56px 0; }
.back .lower { left: 21px; top: 415px; width: 600px; height: 675px; border-radius: 40px 0 0 56px; }
.p4 .back .upper { width: 1928px; }
.back .full { left: 281px; top: 0; width: 1926px; height: 1091px; border-radius: 56px; }

/* spending page */
.spend { position: relative; display: flex; gap: 23px; padding-left: 33px; }
.left { width: 1319px; display: flex; flex-direction: column; }
.lead { display: flex; height: 438px; }
.p3 .nav { width: 250px; padding: 85px 34px 0 0; }
.p3 .nav a, .p4 .nav a, .p5 .nav a { height: 74px; }
.p3 .nav .on::after { right: -34px; }
.lead svg { width: 1052px; height: 424px; margin-left: 17px; }
.tiles { display: grid; grid-template-columns: 204px 206px 207px 198px 209px 179px; justify-content: space-between; height: 116px; }
.tile { background: #191919; border-radius: 16px; display: flex; flex-direction: column; align-items: center; padding-top: 20px; }
.tile:last-child { margin: 2px 0 -1px; }
.tile b { font: 700 42px/52px Roboto, sans-serif; }
.tile span { font-size: 21.500px; line-height: 30px; white-space: nowrap; }
.c-cyan { color: #3ddbd0; } .c-orange { color: #ea8b61; } .c-yellow { color: #e2e22b; }
.c-blue { color: #2b84ea; } .c-red { color: #c8424e; } .c-violet { color: #8768bf; }
.lows { display: flex; gap: 24px; margin-top: 26px; height: 485px; }
.lows .big { width: 840px; height: 485px; }
.catbox { width: 455px; border-radius: 48px; padding: 32px 28px 0 32px; }
.cats { width: 395px; border-collapse: collapse; font-size: 21.500px; table-layout: fixed; }
.cats th { font-weight: 400; height: 47px; padding: 0 0 8px; position: relative; font-size: 21px; }
.cats th:last-child { padding-left: 10px; }
.cats th i { position: absolute; left: 18px; top: 34px; border: 8px solid transparent; border-top-color: #fff; border-bottom: 0; }
.cats td { height: 37.200px; padding: 0 9px; border-bottom: 2px solid #666; line-height: 30px; white-space: nowrap; }
.cats td:last-child { text-align: right; }
.cats tbody tr:first-child td { border-top: 4px solid #686868; }
.cats tbody tr:last-child td { border-bottom: 4px solid #686868; }
.cats tfoot td { border: 0; font-weight: 700; }
.right { width: 810px; padding-top: 24px; display: grid; grid-template-rows: 304px 347px 343px; gap: 24px; }
.right svg { height: 100%; }

/* key figures */
.kpis { position: relative; display: flex; align-items: flex-start; height: 352px; }
.p4 .nav { width: 283px; padding-top: 84px; }
.p5 .nav { width: 281px; padding-top: 83px; }
.p5 .nav a { height: 75.500px; }
.ico.hand { width: 125px; height: 125px; margin: 110px 29px 0 52px; }
.ico.wallet { width: 115px; height: 115px; margin: 110px 33px 0 24px; }
.ico.rupee { width: 95px; height: 95px; margin: 134px 48px 0 28px; }
.kpi { position: relative; flex: none; height: 300px; margin-top: 25px; padding-top: 41px; display: flex; flex-direction: column; align-items: center; border-radius: 30px; }
.kpi::before {
  content: ""; position: absolute; right: 100%; top: 126px;
  border: 24px solid transparent; border-right: 26px solid #191919; border-left: 0;
}
.k1 { width: 362px; } .k2 { width: 465px; } .k3 { width: 532px; }
.kpi b { font: 500 46px/44px Roboto, sans-serif; }
.kpi span { font-size: 22.500px; line-height: 36px; margin-top: 3px; white-space: nowrap; }
.kpi hr { border: 0; background: #c70a1c; height: 4px; width: 294px; margin: 35px 0 33px; flex: none; }
.k2 hr { width: 391px; }
.k3 { padding-top: 48px; }
.k3 b { letter-spacing: 1px; }
.k3 hr { width: 476px; margin: 18px 0 21px; }
.k3 q { quotes: none; font-size: 21.500px; line-height: 31px; color: #a8a8a8; text-align: center; white-space: nowrap; }
.p5 .hand { margin-left: 54px; } .p5 .kpi { height: 301px; margin-top: 24px; }
.p5 .hand { margin-right: 28px; }

/* utilisation charts */
.util {
  position: relative; margin-left: 43px; width: 2148px; display: grid;
  grid-template-columns: 697px 720px 674px; grid-template-rows: 357px 331px; column-gap: 28.500px; row-gap: 27px;
}
.util svg { width: 100%; height: 100%; }
.util .city { grid-area: 1 / 1 / 3 / 2; margin-top: 88px; height: 627px; }
.occ { grid-area: 1 / 2; } .pay { grid-area: 2 / 2; } .age { grid-area: 1 / 3 / 3 / 4; }

/* customer table */
.tablebox { position: relative; display: flex; margin: -1px 0 0 307px; width: 1881px; height: 724px; border-radius: 60px; padding: 16px 0 0 26px; }
.data { border-collapse: collapse; table-layout: fixed; width: 1806px; height: 682px; font-size: 22px; }
.data th, .data td { padding: 0; text-align: center; border-right: 2px solid #555; border-bottom: 2px solid #6b6b6b; white-space: nowrap; }
.data th { height: 57px; color: #e9303f; font-weight: 700; font-size: 22px; padding-bottom: 10px; position: relative; letter-spacing: -.3px; }
.data td { height: 43.700px; line-height: 30px; }
.data th:last-child, .data td:last-child { border-right: 0; }
.data .rest td { height: 12px; border-bottom: 0; line-height: 0; }
.sort::after { content: ""; position: absolute; left: 10px; bottom: 8px; border: 8px solid transparent; border-bottom-color: #e9303f; border-top: 0; }
.scroll { width: 16px; height: 682px; margin-left: 6px; border-radius: 5px; background: #8e8e8e; }
.scroll i { display: block; height: 26px; border-radius: 8px; background: #454545; border: 1px solid #777; }
```
